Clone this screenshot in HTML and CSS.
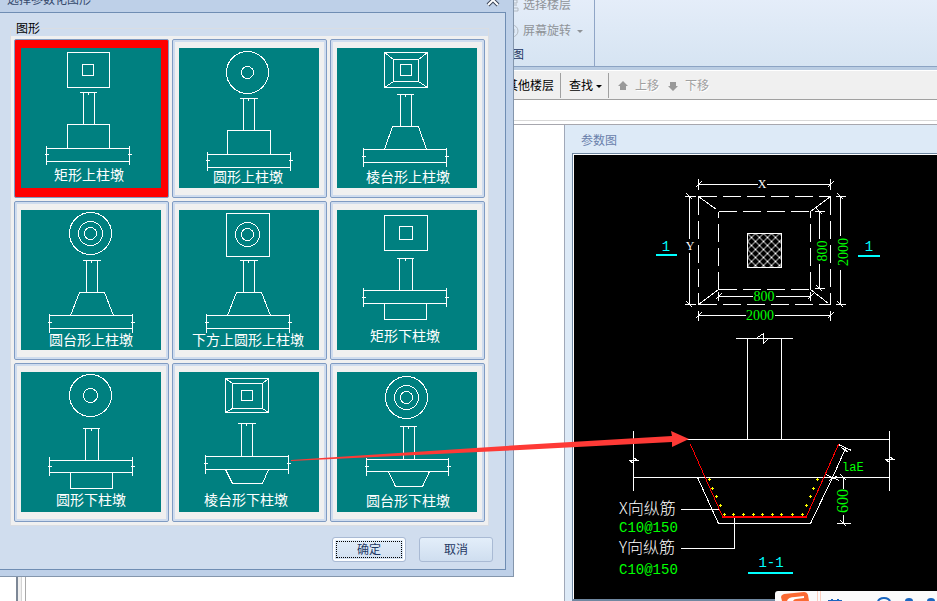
FILE: index.html
```html
<!DOCTYPE html>
<html lang="zh-CN">
<head>
<meta charset="utf-8">
<title>选择参数化图形</title>
<link rel="stylesheet" href="styles.css">
</head>
<body>
<div class="app">
  <header class="ribbon">
    <section class="ribbon-group">
      <button class="ribbon-item" type="button">
        <svg class="ribbon-icon" viewBox="0 0 16 16"><path d="M3 3h10v3H3zM3 8h10M5 11h9v3H5z"/></svg>
        <span>选择楼层</span>
      </button>
      <button class="ribbon-item" type="button">
        <svg class="ribbon-icon" viewBox="0 0 16 16"><circle cx="8" cy="8" r="6"/><path d="M6 6h4v4H6z"/></svg>
        <span>屏幕旋转</span>
        <i class="caret"></i>
      </button>
      <h2 class="ribbon-title">视图</h2>
    </section>
  </header>

  <nav class="toolbar">
    <button class="tool" type="button">复制选定图元到其他楼层</button>
    <button class="tool find" type="button">查找<i class="caret"></i></button>
    <button class="tool move" type="button" disabled>
      <svg class="arrow-icon" viewBox="0 0 10 10"><path d="M5 0l5 5H8v4H2V5H0z"/></svg>上移
    </button>
    <button class="tool move" type="button" disabled>
      <svg class="arrow-icon" viewBox="0 0 10 10"><path d="M5 10l5-5H8V1H2v4H0z"/></svg>下移
    </button>
  </nav>
  <div class="strip"></div>

  <main class="workspace">
    <div class="tree"></div>
    <div class="splitter"></div>
    <div class="properties"></div>
    <section class="panel">
      <h2 class="panel-title">参数图</h2>
      <div class="canvas">
        <svg class="drawing" width="363" height="444" viewBox="574 155 363 444">
          <defs>
            <pattern id="hatch" width="8" height="8" x="747" y="233" patternUnits="userSpaceOnUse">
              <path class="hatch-line" d="M-1 -1L9 9M9 -1L-1 9"/>
            </pattern>
            <marker id="bar" markerWidth="3" markerHeight="3" refX="1" refY="1" markerUnits="userSpaceOnUse">
              <path class="bar" d="M1 0h1v1h1v1H2v1H1V2H0V1h1z"/>
            </marker>
          </defs>
          <g class="lines" transform="translate(.5 .5)">
            <path d="M698 184H757M766 184H830M698 178V189M830 178V189M695 187l6-6M827 187l6-6"/>
            <path d="M689 196V238M689 252V304M684 196h11M684 304h11M686 193l6 6M686 301l6 6"/>
            <path d="M840 196V235M840 269V304M835 196h10M835 304h10M837 193l6 6M837 301l6 6"/>
            <path d="M819 211V238M819 263V288M814 211h10M814 288h10M816 208l6 6M816 285l6 6"/>
            <path d="M718 296H752M775 296H810M718 291V300M810 291V300M715 299l6-6M807 299l6-6"/>
            <path d="M698 315H745M774 315H830M698 310V320M830 310V320M695 318l6-6M827 318l6-6"/>
            <path class="dashed" d="M698 196H830M698 196V304M830 196V304M698 304H830M718 211H810M718 289H810"/>
            <path class="dashed late" d="M718 211V289M810 211V289"/>
            <path d="M698 196l18 13M830 196l-20 15M698 304l20-15M828 303l-18-14"/>
            <path class="hatched" d="M747 233h34v34h-34z"/>
            <path d="M735 338H792M757 337l6-4v10l5-5M747 338V439M781 338V439"/>
            <path d="M633 439H889M633 477H889M633 430V490M889 430V490M629 460H638M633 457l4 3M633 463l-4-3M885 459H894M889 456l4 3M889 462l-4-3"/>
            <path d="M680 509H718M680 548H734V516"/>
            <path d="M697 477L718 523H810L832 477L845 448M838 444l13 6M825 474l14 6M841 447l7 5M829 480l8-5"/>
            <path d="M843 477V488M843 514V523M836 523h14M837 477h9M840 474l6 6M840 520l6 6"/>
            <path class="rebar" d="M690 444L722 516M806 516L838 444"/>
          </g>
          <path class="rebar-base" d="M722 517H807"/>
          <polyline class="dots" points="709,479 712,488 716,496 720,505 724,514 733,514 743,514 753,514 762,514 772,514 781,514 792,514 802,514 806,505 810,496 813,488 817,479"/>
          <path class="mark" d="M656 255H677M858 256H880M748 573H793"/>
          <g class="axis"><text x="762" y="188">X</text><text x="690" y="250">Y</text></g>
          <g class="dim">
            <text x="764" y="301">800</text>
            <text x="760" y="320">2000</text>
            <text transform="translate(827 251) rotate(-90)">800</text>
            <text transform="translate(848 252) rotate(-90)">2000</text>
            <text class="big" transform="translate(848 501) rotate(-90)">600</text>
          </g>
          <g class="spec">
            <text x="619" y="532">C10@150</text>
            <text x="619" y="574">C10@150</text>
            <text class="small" x="842" y="471">laE</text>
          </g>
          <g class="section"><text x="666" y="251">1</text><text x="869" y="251">1</text><text x="771" y="567">1-1</text></g>
          <g class="note"><text x="619" y="514">X向纵筋</text><text x="619" y="553">Y向纵筋</text></g>
        </svg>
      </div>
    </section>
  </main>
</div>

<section class="dialog" role="dialog" aria-label="选择参数化图形">
  <header class="dialog-bar">
    <h1 class="dialog-title">选择参数化图形</h1>
    <button class="close" type="button" aria-label="关闭">
      <svg viewBox="0 0 12 12"><path class="edge" d="M1 1l10 10M11 1L1 11"/><path d="M1 1l10 10M11 1L1 11"/></svg>
    </button>
  </header>
  <div class="dialog-body">
    <fieldset class="group">
      <legend>图形</legend>
      <div class="shapes">
        <button class="shape selected" type="button"><svg viewBox="0 0 140 140">
          <path transform="translate(.5 .5)" d="M46 4H88V39H46zM61 16H72V27H61zM58 44H75M67 43V46M62 44V76M73 44V76M46 100V76H88V100M25 100H108M25 113H108M25 97V116M108 97V116M23 106h4M106 106h4"/>
          <text x="68" y="132">矩形上柱墩</text></svg></button>
        <button class="shape" type="button"><svg viewBox="0 0 140 140">
          <g transform="translate(.5 .5)"><circle cx="68" cy="24" r="21"/><circle cx="68" cy="24" r="6"/>
          <path d="M60 50H78M69 49V52M64 50V82M75 50V82M48 106V82H91V106M28 106H111M28 119H111M28 103V122M111 103V122M26 112h4M109 112h4"/></g>
          <text x="69" y="134">圆形上柱墩</text></svg></button>
        <button class="shape" type="button"><svg viewBox="0 0 140 140">
          <path transform="translate(.5 .5)" d="M47 4H90V39H47zM56 11H81V33H56zM63 16H74V27H63zM47 4l9 7M90 4l-9 7M47 39l9-6M90 39l-9-6M59 46H76M68 45V48M63 46V78M74 46V78M47 101L55 78H81L89 101M26 101H109M26 114H109M26 99V118M109 99V118M24 108h4M107 108h4"/>
          <text x="71" y="134">棱台形上柱墩</text></svg></button>
        <button class="shape" type="button"><svg viewBox="0 0 140 140">
          <g transform="translate(.5 .5)"><circle cx="69" cy="23" r="21"/><circle cx="69" cy="23" r="12"/><circle cx="69" cy="23" r="6"/>
          <path d="M61 50H79M70 49V52M65 50V82M76 50V82M49 105L58 82H83L92 105M28 105H111M28 118H111M28 103V122M111 103V122M26 112h4M109 112h4"/></g>
          <text x="70" y="135">圆台形上柱墩</text></svg></button>
        <button class="shape" type="button"><svg viewBox="0 0 140 140">
          <g transform="translate(.5 .5)"><circle cx="68" cy="24" r="12"/><circle cx="68" cy="24" r="6"/>
          <path d="M47 3H90V46H47zM60 50H78M69 49V52M64 50V82M75 50V82M48 105L57 82H82L91 105M27 105H110M27 118H110M27 103V122M110 103V122M25 112h4M108 112h4"/></g>
          <text x="69" y="135">下方上圆形上柱墩</text></svg></button>
        <button class="shape" type="button"><svg viewBox="0 0 140 140">
          <path transform="translate(.5 .5)" d="M47 5H90V40H47zM62 16H75V29H62zM59 48H76M68 47V50M62 48V80M75 48V80M26 80H109M26 93H109M26 77V96M109 77V96M24 87h4M107 87h4M47 93V109H89V93"/>
          <text x="68" y="131">矩形下柱墩</text></svg></button>
        <button class="shape" type="button"><svg viewBox="0 0 140 140">
          <g transform="translate(.5 .5)"><circle cx="69" cy="23" r="21"/><circle cx="69" cy="23" r="7"/>
          <path d="M61 56H78M70 55V58M64 56V88M77 56V88M28 88H111M28 100H111M28 84V103M111 84V103M26 94h4M109 94h4M49 100V116H91V100"/></g>
          <text x="70" y="133">圆形下柱墩</text></svg></button>
        <button class="shape" type="button"><svg viewBox="0 0 140 140">
          <path transform="translate(.5 .5)" d="M46 6H89V40H46zM53 11H83V36H53zM62 18H73V28H62zM46 6l7 5M89 6l-6 5M46 40l7-4M89 40l-6-4M58 51H76M67 50V53M62 51V84M73 51V84M26 84H109M26 97H109M26 82V101M109 82V101M24 91h4M107 91h4M46 97L53 111H83L89 97"/>
          <text x="67" y="133">棱台形下柱墩</text></svg></button>
        <button class="shape" type="button"><svg viewBox="0 0 140 140">
          <g transform="translate(.5 .5)"><circle cx="69" cy="25" r="21"/><circle cx="69" cy="25" r="12"/><circle cx="69" cy="25" r="6"/>
          <path d="M62 54H79M71 53V56M66 54V87M77 54V87M29 87H111M29 99H111M29 85V103M111 85V103M27 94h4M109 94h4M51 99L58 114H85L92 99"/></g>
          <text x="71" y="134">圆台形下柱墩</text></svg></button>
      </div>
    </fieldset>
    <footer class="actions">
      <button class="action default" type="button"><span>确定</span></button>
      <button class="action" type="button"><span>取消</span></button>
    </footer>
  </div>
</section>

<svg class="pointer" width="400" height="20" viewBox="290 430 400 20">
  <path d="M291 460L520 445L672 436L671 431L689 439L672 447V442L520 450L291 461z"/>
</svg>

<aside class="ime">
  <svg width="162" height="10" viewBox="775 591 162 10">
    <path class="ime-logo" d="M781 597q0-2 3-3l20-2q3 0 4 3l1 6h-27z"/>
    <path class="ime-swirl" d="M787 601q1-4 8-4l9-1v2l-8 1q-2 0-3 2z"/>
    <path class="ime-rule" d="M817 591h1v10h-1zM820 591h1v10h-1z"/>
    <path class="ime-glyph" d="M828 601h14M832 599v2M838 599v2M878 602a6 4 0 0 1 12 0"/>
    <path class="ime-fill" d="M905 601a4 3 0 0 1 8 0zM927 601a4 3 0 0 1 8 0z"/>
  </svg>
</aside>
</body>
</html>
```

FILE: styles.css
```css
* { box-sizing: border-box; }

body {
  margin: 0;
  height: 100vh;
  overflow: hidden;
  position: relative;
  background: #fff;
  font: 12px/16px "Liberation Sans", "Noto Sans CJK SC", sans-serif;
  color: #000;
}

button {
  margin: 0;
  padding: 0;
  border: 0;
  background: none;
  color: inherit;
  font: inherit;
}

h1, h2 { margin: 0; font: inherit; }

.app {
  display: flex;
  flex-direction: column;
  height: 100vh;
}

/* Ribbon: scrolled slightly under the top edge of the window */
.ribbon {
  display: flex;
  flex: none;
  margin-top: -8px;
  background: linear-gradient(#e6eefa, #d6e4f2);
  border-bottom: 1px solid #8ba3c3;
  box-shadow: 0 3px 0 #b9cce2;
}
.ribbon-group {
  display: grid;
  grid-template-rows: 26px 26px 22px;
  width: 595px;
  padding-left: 504px;
  border-right: 1px solid #8fa5c6;
}
.ribbon-item {
  display: flex;
  align-items: center;
  gap: 3px;
  color: #8f9398;
}
.ribbon-icon {
  width: 16px;
  height: 16px;
  fill: none;
  stroke: #b3bac2;
}
.caret {
  border: 3px solid transparent;
  border-top-color: currentColor;
  border-bottom: 0;
}
.ribbon-item .caret { margin-left: 3px; }
.ribbon-title {
  margin-left: -4px;
  padding-top: 3px;
  color: #1d3763;
}

.toolbar {
  display: flex;
  flex: none;
  align-items: center;
  height: 30px;
  margin-top: 3px;
  background: #f0f0f0;
  border-top: 1px solid #fff;
  border-bottom: 1px solid #a0a0a0;
}
.tool { height: 25px; padding-top: 2px; white-space: nowrap; }
.tool:first-child {
  width: 561px;
  padding-right: 6px;
  text-align: right;
  border-right: 1px solid #a0a0a0;
}
.find {
  display: flex;
  align-items: center;
  gap: 3px;
  padding: 2px 6px 0 8px;
  border-right: 1px solid #a0a0a0;
}
.move {
  display: flex;
  align-items: center;
  gap: 7px;
  margin-left: 9px;
  color: #a0a0a0;
  text-shadow: 1px 1px 0 #fff;
}
.arrow-icon { width: 10px; height: 10px; fill: #999; }

.strip {
  flex: none;
  height: 25px;
  border-bottom: 1px solid #a7a7ae;
  background: #fff;
  box-shadow: inset 0 -3px 0 #fff, inset 0 -4px 0 #d8d8d8;
}

/* Workspace */
.workspace { display: flex; flex: 1; min-height: 0; }
.tree { width: 16px; }
.splitter {
  width: 6px;
  background: #f0f0f0;
  border-left: 2px solid #7d8796;
  border-right: 1px solid #d4d4d4;
}
.properties {
  width: 540px;
  margin-left: 3px;
  border-left: 1px solid #a8a8a8;
}
.panel {
  display: flex;
  flex: 1;
  flex-direction: column;
  padding-left: 7px;
  background: #ddeaf7;
  border-left: 1px solid #a0a8b8;
}
.panel-title {
  padding: 8px 9px 4px;
  color: #6980ab;
}
.canvas {
  flex: 1;
  min-height: 0;
  overflow: hidden;
  background: #000;
  border: solid #6f87a0;
  border-width: 1px 0 2px 1px;
  box-shadow: inset 1px 1px 0 #fff;
}

/* Parameter drawing */
.drawing { display: block; margin: 1px 0 0 1px; }
.drawing path { fill: none; stroke: #fff; shape-rendering: crispEdges; }
.drawing .dashed { stroke-dasharray: 18 6; }
.drawing .late { stroke-dashoffset: 12; }
.drawing .hatched { fill: url(#hatch); }
.drawing .hatch-line { shape-rendering: auto; }
.drawing .rebar { stroke: #f00; }
.drawing .rebar-base { stroke: #f00; stroke-width: 2; }
.drawing .bar { fill: #ff0; stroke: none; }
.drawing .dots { fill: none; marker: url(#bar); }
.drawing .mark { stroke: #0ff; stroke-width: 2; }
.axis {
  font: 12px "Liberation Serif", serif;
  fill: #fff;
  text-anchor: middle;
}
.dim {
  font: 14px "Liberation Serif", serif;
  fill: #0f0;
  text-anchor: middle;
}
.dim .big { font-size: 16px; }
.spec { font: 14px "Liberation Mono", monospace; fill: #0f0; }
.spec .small { font-size: 12px; }
.section {
  font: 14px "Liberation Mono", monospace;
  fill: #0ff;
  text-anchor: middle;
}
.note { font: 16px "Noto Sans CJK SC", sans-serif; font-weight: 300; fill: #fff; }

/* Dialog: its title bar reaches above the window */
.dialog {
  position: absolute;
  top: -18px;
  left: 0;
  width: 514px;
  padding: 0 7px 6px 0;
  background: #bed0e8;
  border: solid #8496ac;
  border-width: 0 1px 1px 0;
}
.dialog-bar {
  display: flex;
  justify-content: space-between;
  align-items: center;
  height: 30px;
  padding: 5px 7px 0 7px;
  color: #34496c;
}
.close { display: flex; }
.close svg {
  width: 12px;
  height: 12px;
  overflow: visible;
  fill: none;
  stroke: #fff;
  stroke-width: 2;
}
.close .edge { stroke: #3c4658; stroke-width: 4; }
.dialog-body {
  padding: 8px 0 7px;
  background: #d0ddee;
  border: solid #6f8db3;
  border-width: 1px 1px 1px 0;
}
.group {
  margin: 0 16px 0 10px;
  padding: 0;
  border: 1px solid #d9dde3;
}
.group legend {
  height: 15px;
  margin-left: 4px;
  padding: 0 1px;
  line-height: 16px;
}
.shapes {
  display: grid;
  grid-template-columns: repeat(3, 155px);
  gap: 3px;
  padding: 3px;
  background: #f0f0f0;
}
.shape {
  display: flex;
  height: 159px;
  padding: 8px 7px 9px 6px;
  background: #f0f0f0;
  border: 1px solid #7f9bc3;
  border-radius: 2px;
  box-shadow: inset 0 0 0 2px #cfdcee;
}
.shape.selected { background: #f00; box-shadow: none; }
.shape svg { width: 140px; height: 140px; background: #008080; }
.shape path, .shape circle { fill: none; stroke: #fff; shape-rendering: crispEdges; }
.shape text {
  font: 14px "Noto Sans CJK SC", sans-serif;
  fill: #fff;
  text-anchor: middle;
}

.actions {
  display: flex;
  justify-content: flex-end;
  gap: 13px;
  padding: 11px 12px 0 0;
}
.action {
  display: flex;
  width: 74px;
  height: 25px;
  padding: 2px;
  background: linear-gradient(#e3eefa, #cfdeef);
  border: 1px solid #a9bad4;
  border-radius: 3px;
  color: #1e3763;
}
.action span { flex: 1; line-height: 20px; }
.action.default { box-shadow: inset 0 0 0 2px #fbfdff; }
.action.default span { margin: 1px; border: 1px dotted #000; line-height: 16px; }

/* Annotation arrow over the dialog and the canvas */
.pointer {
  position: absolute;
  top: 430px;
  left: 290px;
  overflow: visible;
  pointer-events: none;
  fill: #fe3a36;
}

/* Input method bar at the screen corner */
.ime {
  position: absolute;
  right: 0;
  bottom: 0;
  background: #fbfbfb;
  border-radius: 3px 0 0 0;
}
.ime svg { display: block; }
.ime-logo { fill: #fb6a33; }
.ime-swirl { fill: #fff; }
.ime-rule { fill: #fbd0c0; }
.ime-glyph { fill: none; stroke: #1a66c0; stroke-width: 2; }
.ime-fill { fill: #1a66c0; }
```
